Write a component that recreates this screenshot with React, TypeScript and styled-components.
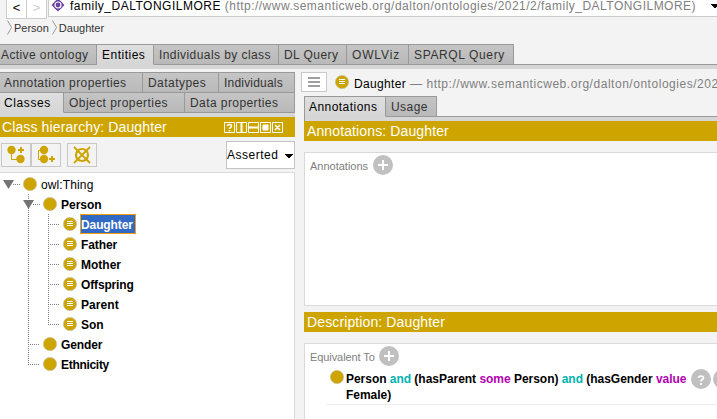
import React from "react";
import styled, { createGlobalStyle } from "styled-components";

const gold = "#cea500";

const Global = createGlobalStyle`
  * { box-sizing: border-box; }
  body { margin: 0; background: #f3f3f3; overflow: hidden; font: 12px/20px "Liberation Sans", Arial, sans-serif; color: #000; }
  svg { display: block; flex: none; }
`;
const Window = styled.div`width: 717px; height: 419px; overflow: hidden; display: flex; flex-direction: column;`;
const Text = styled.span<{ $ls?: number; $c?: string; $size?: number; $bold?: boolean }>`
  white-space: pre; flex: none;
  letter-spacing: ${p => p.$ls ?? 0}px;
  color: ${p => p.$c ?? "inherit"};
  font-size: ${p => p.$size ?? 12}px;
  font-weight: ${p => (p.$bold ? 700 : 400)};
`;
const TopBar = styled.div`display: flex; height: 18px; padding-left: 6px; flex: none; align-items: flex-start;`;
const NavButton = styled.div<{ $off?: boolean }>`
  width: 20px; height: 19px; background: #fff; border: solid #ccc; border-width: 0 1px 1px 0;
  &:first-child { border-left-width: 1px; width: 21px; }
  text-align: center; line-height: 15px; font-size: 13px; color: ${p => (p.$off ? "#ccc" : "#000")};
`;
const Address = styled.div`
  flex: 1; margin-left: 1px; height: 17px; background: #fff; border: solid #ccc; border-width: 0 0 1px 1px;
  display: flex; line-height: 13px; padding-left: 2px;
  ${Text}:first-of-type { margin-left: 5px; }
`;
const Caret = styled.svg`margin: 4px 0 0 auto;`;
const Crumbs = styled.div`display: flex; height: 26px; padding: 2px 0 0 7px; line-height: 16px; flex: none; color: #333;`;
const Crumb = styled.div`display: flex; gap: 2px; margin-right: 3px;`;
const TabRow = styled.div<{ $line?: boolean; $joined?: boolean }>`
  display: flex; height: 21px; flex: none; margin-top: ${p => (p.$joined ? -1 : 0)}px;
  &::after { content: ""; flex: 1; border-bottom: ${p => (p.$line ? "1px solid #999" : "0")}; }
`;
const Tab = styled.div<{ $w: number; $on?: boolean; $pad?: number }>`
  width: ${p => p.$w}px; padding-left: ${p => p.$pad ?? 5}px; line-height: 21px; white-space: nowrap; flex: none;
  border-top: 1px solid #999; border-right: 1px solid #999;
  border-bottom: 1px solid ${p => (p.$on ? "#d6d6d6" : "#999")};
  background: ${p => (p.$on ? "linear-gradient(#dedede,#d6d6d6)" : "linear-gradient(#c5c5c5,#b9b9b9)")};
  color: ${p => (p.$on ? "#000" : "#333")};
`;
const Strip = styled.div<{ $h: number }>`height: ${p => p.$h}px; background: #d6d6d6; flex: none;`;
const Body = styled.div`display: flex; flex: 1; min-height: 0;`;
const Left = styled.div`width: 295px; flex: none; display: flex; flex-direction: column; padding-top: 3px;`;
const Right = styled.div`flex: 1; min-width: 0; display: flex; flex-direction: column; padding: 3px 0 0 9px;`;
const Title = styled.div<{ $pad: number }>`
  height: 20px; background: ${gold}; color: #fff; padding-left: ${p => p.$pad}px; display: flex; flex: none; align-items: center;
  svg { margin-left: auto; margin-right: 12px; }
`;
const Tools = styled.div`display: flex; height: 35px; padding: 6px 0 0 1px; flex: none;`;
const ToolButton = styled.div`
  width: 30px; height: 24px; border: 1px solid #c8c8c8; display: flex; align-items: center; justify-content: center;
  &:nth-child(3) { margin-left: 6px; }
`;
const Select = styled.div`
  width: 69px; height: 28px; margin: -2px 0 0 auto; background: #fff; border: 1px solid #c4c4c4; line-height: 26px; display: flex;
  svg { margin: 12px 1px 0 auto; }
`;
const Tree = styled.div`flex: 1; background: #fff; border: solid #d9dada; border-width: 1px 1px 0 0; padding-top: 1px;`;
const Node = styled.div`height: 20px; display: flex; align-items: center;`;
const NodeText = styled.div<{ $sel?: boolean }>`
  height: 20px; line-height: 20px; padding: 0 ${p => (p.$sel ? 2 : 0)}px 0 0;
  border: 1px solid ${p => (p.$sel ? "#f59f0b" : "transparent")};
  ${p => p.$sel && "background: #316ac5; color: #fff; width: 56px;"}
  margin-left: 3px;
`;
const Heading = styled.div`display: flex; height: 24px; flex: none; margin-left: -3px;`;
const Menu = styled.div`
  width: 26px; height: 20px; background: #fff; border: 1px solid #c8c8c8; display: flex; align-items: center; justify-content: center;
  margin-right: 8px; flex: none;
`;
const HeadText = styled.div`line-height: 24px; margin-left: 5px; white-space: pre; color: #808080;`;
const RightTabs = styled.div`border-left: 1px solid #999; display: flex; flex-direction: column;`;
const Panel = styled.div<{ $h: number; $mb?: number }>`
  height: ${p => p.$h}px; margin: 11px 0 ${p => p.$mb ?? 0}px; background: #fff; border: solid #d9dada; border-width: 1px 0 1px 1px; flex: none;
  padding: 2px 0 0 5px;
`;
const SectionHead = styled.div<{ $gap: number }>`
  display: flex; height: 20px; align-items: center; gap: ${p => p.$gap}px; color: #808080; line-height: 18px;
  ${Text} { padding-top: 2px; }
`;
const Axiom = styled.div`
  display: flex; margin-left: 16px; height: 37px; padding-left: 4px; font-weight: 700; line-height: 16px; white-space: pre;
  margin-top: 2px; border-bottom: 1px solid #eee; overflow: hidden;
  > svg { margin: 1px 2px 0 0; }
  > svg:first-child { margin: 2px 0 0; }
`;
const Expression = styled.div`margin: 3px 0 0 2px; width: 345px; flex: none; letter-spacing: -0.03px;`;
const And = styled.span`color: #00b2b2;`;
const Quant = styled.span`color: #b200b2;`;

const Dot = ({ eq = false }: { eq?: boolean }) => (
  <svg width="14" height="14" viewBox="0 0 14 14">
    <circle cx="7" cy="7" r="6.6" fill={gold} stroke="#c7bd98" strokeWidth=".7" />
    {eq && <path d="M4 4.5h6M4 6.5h6M4 8.5h6" stroke="#fff" />}
  </svg>
);
const Round = ({ help = false }: { help?: boolean }) => (
  <svg width="20" height="20" viewBox="0 0 20 20">
    <circle cx="10" cy="10" r="10" fill="#c0c0c0" />
    {help
      ? <path d="M7.5 8.8C7.5 6.4 12.4 6.5 12.4 9C12.4 10.7 10 10.5 10 12.5M10 13.9v2" stroke="#fff" strokeWidth="1.8" fill="none" />
      : <path d="M10 5v10M5 10h10" stroke="#fff" strokeWidth="2" />}
  </svg>
);
const Down = () => <path d="M0 0h8v1H7v1H6v1H5v1H3V3H2V2H1V1H0z" />;

type Item = { name: string; depth: number; eq?: boolean; sel?: boolean; open?: boolean; ls?: number };
const items: Item[] = [
  { name: "owl:Thing", depth: 0, open: true, ls: 0.12 },
  { name: "Person", depth: 1, open: true },
  { name: "Daughter", depth: 2, eq: true, sel: true, ls: -0.1 },
  { name: "Father", depth: 2, eq: true, ls: -0.08 },
  { name: "Mother", depth: 2, eq: true },
  { name: "Offspring", depth: 2, eq: true, ls: -0.15 },
  { name: "Parent", depth: 2, eq: true, ls: 0.08 },
  { name: "Son", depth: 2, eq: true },
  { name: "Gender", depth: 1, ls: -0.1 },
  { name: "Ethnicity", depth: 1, ls: -0.3 },
];

function Branch({ item, index }: { item: Item; index: number }) {
  const x = 8 + item.depth * 20;
  const dash = { stroke: "#808080", strokeDasharray: "1 1", fill: "none" };
  const last = index === items.length - 1;
  return (
    <svg width={23 + item.depth * 20} height="20">
      {index > 0 && <path d={`M28.5 0V${last ? 10 : 20}`} {...dash} />}
      {item.depth === 2 && <path d={`M48.5 0V${item.name === "Son" ? 10 : 20}`} {...dash} />}
      <path d={`M${x + (item.open ? 5 : 0)} 10.5H${x + 12}`} {...dash} />
      {item.open && <path d={`M${x - 5} 6h11l-5.5 9z`} fill="#747474" />}
    </svg>
  );
}

export default function App() {
  return (
    <Window>
      <Global />
      <TopBar>
        <NavButton>&lt;</NavButton><NavButton $off>&gt;</NavButton>
        <Address>
          <svg width="14" height="14" viewBox="0 0 14 14">
            <path d="M7-1.5L13.5 5L7 11.5L.5 5z" fill="#6b43a0" />
            <circle cx="7" cy="5" r="4.7" fill="#6b43a0" />
            <circle cx="7" cy="5" r="3" fill="none" stroke="#fff" strokeWidth="1.2" />
          </svg>
          <Text $ls={0.5}>family_DALTONGILMORE </Text>
          <Text $ls={0.48} $c="#808080">(http://www.semanticweb.org/dalton/ontologies/2021/2/family_DALTONGILMORE)</Text>
          <Caret width="6" height="4"><Down /></Caret>
        </Address>
      </TopBar>
      <Crumbs>
        {["Person", "Daughter"].map(c => (
          <Crumb key={c}>
            <svg width="5" height="15"><path d="M.5.5L4.5 7.5L.5 14.5" stroke="#999" fill="none" /></svg>
            <Text $size={11}>{c}</Text>
          </Crumb>
        ))}
      </Crumbs>
      <TabRow $line>
        <Tab $w={97} $pad={1}><Text $ls={0.4}>Active ontology</Text></Tab>
        <Tab $w={57} $on><Text $ls={0.5}>Entities</Text></Tab>
        <Tab $w={125}><Text $ls={0.43}>Individuals by class</Text></Tab>
        <Tab $w={68}><Text $ls={0.45}>DL Query</Text></Tab>
        <Tab $w={62}><Text $ls={0.85}>OWLViz</Text></Tab>
        <Tab $w={105}><Text $ls={0.63}>SPARQL Query</Text></Tab>
      </TabRow>
      <Strip $h={4} />
      <Body>
        <Left>
          <TabRow>
            <Tab $w={143} $pad={4}><Text $ls={0.4}>Annotation properties</Text></Tab>
            <Tab $w={76}><Text $ls={0.45}>Datatypes</Text></Tab>
            <Tab $w={76}><Text $ls={0.2}>Individuals</Text></Tab>
          </TabRow>
          <TabRow $joined>
            <Tab $w={64} $on $pad={4}><Text $ls={0.6}>Classes</Text></Tab>
            <Tab $w={121}><Text $ls={0.45}>Object properties</Text></Tab>
            <Tab $w={110}><Text $ls={0.42}>Data properties</Text></Tab>
          </TabRow>
          <Strip $h={4} />
          <Title $pad={2}>
            <Text $size={14} $ls={0.12}>Class hierarchy: Daughter</Text>
            <svg width="59" height="11" stroke="#fff" fill="none">
              <path d="M.5.5h10v10h-10zM12.5.5h10v10h-10zM24.5.5h10v10h-10zM36.5.5h10v10h-10zM48.5.5h10v10h-10z" />
              <path d="M3.5 4C3.5 2 7.5 2 7.5 4S5.5 5 5.5 7M5.5 8v1.5M51 3l5 5M56 3l-5 5" strokeWidth="1.5" />
              <path d="M17.5 1v9M25 5.5h9" strokeWidth="2" />
              <path d="M39 3h5v5h-5z" fill="#fff" />
            </svg>
          </Title>
          <Tools>
            <ToolButton><svg width="20" height="20" viewBox="0 0 20 20" fill={gold} stroke={gold}><g stroke="none"><circle cx="5.5" cy="5" r="4.2" /><circle cx="14.5" cy="14" r="4.2" /></g><path d="M5.5 8v6.5h6" fill="none" /><path d="M12 5h6M15 2v6" strokeWidth="2" /></svg></ToolButton>
            <ToolButton><svg width="20" height="20" viewBox="0 0 20 20" fill={gold} stroke={gold}><g stroke="none"><circle cx="8" cy="5" r="4.2" /><circle cx="8" cy="14" r="4.2" /></g><path d="M6 5.5H2.5v9H6" fill="none" /><path d="M13 14h6M16 11v6" strokeWidth="2" /></svg></ToolButton>
            <ToolButton><svg width="18" height="18" viewBox="0 0 18 18" fill="none" stroke={gold} strokeWidth="1.8"><circle cx="9" cy="9" r="6" strokeWidth="2.2" /><path d="M1 1l16 16M17 1L1 17" /></svg></ToolButton>
            <Select><Text $ls={0.5}>Asserted</Text><svg width="8" height="4"><Down /></svg></Select>
          </Tools>
          <Tree>
            {items.map((it, i) => (
              <Node key={it.name}>
                <Branch item={it} index={i} /><Dot eq={it.eq} />
                <NodeText $sel={it.sel}><Text $bold={i > 0} $ls={it.ls}>{it.name}</Text></NodeText>
              </Node>
            ))}
          </Tree>
        </Left>
        <Right>
          <Heading>
            <Menu><svg width="12" height="10"><path d="M0 1h12M0 5h12M0 9h12" stroke="#808080" strokeWidth="1.6" /></svg></Menu>
            <svg width="14" height="20" viewBox="0 -3 14 20"><circle cx="7" cy="7" r="6.6" fill={gold} stroke="#c7bd98" strokeWidth=".7" /><path d="M4 4.5h6M4 6.5h6M4 8.5h6" stroke="#fff" /></svg>
            <HeadText><Text $c="#000" $ls={0.35}>Daughter</Text><Text $ls={0.53}> — http://www.semanticweb.org/dalton/ontologies/202</Text></HeadText>
          </Heading>
          <RightTabs>
            <TabRow $line>
              <Tab $w={81} $on $pad={4}><Text $ls={0.45}>Annotations</Text></Tab>
              <Tab $w={51}><Text $ls={0.45}>Usage</Text></Tab>
            </TabRow>
            <Strip $h={4} />
          </RightTabs>
          <Title $pad={3}><Text $size={14} $ls={0.12}>Annotations: Daughter</Text></Title>
          <Panel $h={154} $mb={6}><SectionHead $gap={5}><Text $size={11}>Annotations</Text><Round /></SectionHead></Panel>
          <Title $pad={3}><Text $size={14} $ls={0.12}>Description: Daughter</Text></Title>
          <Panel $h={90}>
            <SectionHead $gap={4}><Text $size={11} $ls={-0.08}>Equivalent To</Text><Round /></SectionHead>
            <Axiom>
              <Dot />
              <Expression>Person <And>and</And> (hasParent <Quant>some</Quant> Person) <And>and</And> (hasGender <Quant>value</Quant>{"\n"}Female)</Expression>
              <Round help /><Round />
            </Axiom>
          </Panel>
        </Right>
      </Body>
    </Window>
  );
}
